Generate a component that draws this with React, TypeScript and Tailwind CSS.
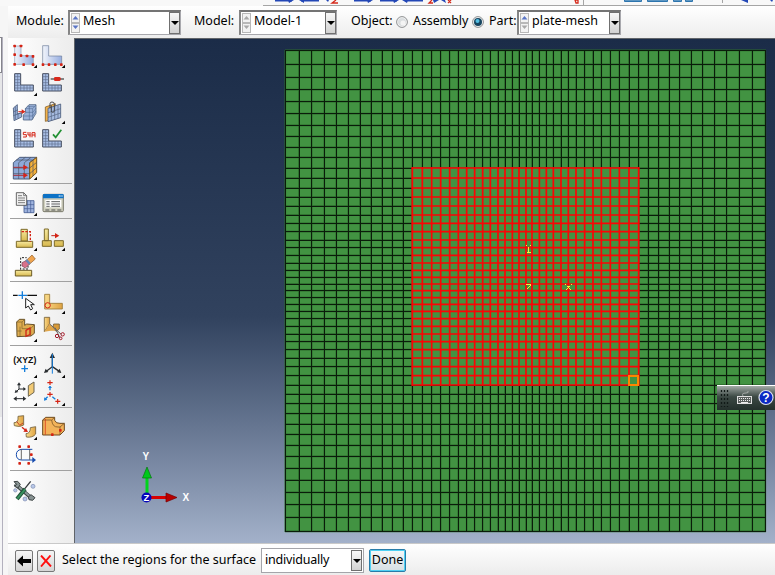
import type { ReactNode } from "react";

const FONT = "font-['Noto_Sans','Open_Sans',sans-serif]";

/* Mesh seed positions, in thirds of a pixel */
const colsLeft = [16, 57, 95, 133, 169, 205, 240, 273, 306, 337, 369, 397, 427, 455, 482, 509, 535, 560, 584, 608, 631, 654, 675, 697, 717, 738].map((v) => 280 + v / 3);
const colsRight = [21, 43, 64, 85, 108, 130, 153, 179, 204, 229, 256, 283, 312, 341, 370, 401, 433, 464, 499, 533, 569, 605, 643, 682, 721].map((v) => 525 + v / 3);
const rowsTop = [13, 55, 94, 131, 167, 203, 238, 271, 304, 334, 366, 396, 426, 453, 480, 507, 532, 557].map((v) => 46 + v / 3);
const rowsBottom = [0, 23, 46, 69, 91, 112, 132, 152, 173, 193, 214, 236, 259, 282, 305, 329, 354, 380, 407, 435, 462, 491, 521, 552, 583, 616, 649, 685, 720, 757, 794, 832, 874].map((v) => 240 + v / 3);
const cols = [...colsLeft, ...colsRight];
const rows = [...rowsTop, ...rowsBottom];
const redCols = cols.slice(11, 40);
const redRows = rows.slice(10, 38);

const snap = (v: number) => Math.floor(v) + 0.5;
const vLines = (xs: number[], a: number, b: number) => xs.map((x) => `M${x.toFixed(2)} ${a}V${b}`).join("");
const hLines = (ys: number[], a: number, b: number) => ys.map((y) => `M${a} ${y.toFixed(2)}H${b}`).join("");

function Viewport() {
  const rx0 = redCols[0];
  const rx1 = redCols[redCols.length - 1];
  const ry0 = redRows[0];
  const ry1 = redRows[redRows.length - 1];
  return (
    <svg className="block" width="700" height="504" viewBox="75 39 700 504">
      <rect x="285" y="50" width="481" height="482" fill="#429342" />
      <path d={vLines(cols, 50, 532)} stroke="#2b6a2b" strokeWidth="1.6" />
      <path d={hLines(rows, 285, 766)} stroke="#2b6a2b" strokeWidth="1.6" />
      <path d={vLines(cols.map(snap), 50, 532)} stroke="#0a1c0a" strokeWidth="1" />
      <path d={hLines(rows.map(snap), 285, 766)} stroke="#0a1c0a" strokeWidth="1" />
      <rect x={rx0} y={ry0} width={rx1 - rx0} height={ry1 - ry0} fill="#429342" />
      <path d={vLines(redCols, ry0 - 0.8, ry1 + 0.8)} stroke="#fa0505" strokeWidth="1.7" />
      <path d={hLines(redRows, rx0 - 0.8, rx1 + 0.8)} stroke="#fa0505" strokeWidth="1.7" />
      <rect x="629" y="376" width="9" height="9" fill="#429342" stroke="#ff8500" strokeWidth="2" />

      <g stroke="#f4f43c" strokeWidth="1" fill="none" shapeRendering="crispEdges">
        <path d="M526 245.500H527M530 245.500H531M528.500 247V252M526.500 252.500H531" />
        <path d="M526 284.500H531M530 285.500H531M529 286.500H530M528 287.500H529M527 288.500H528" />
        <path d="M565 284.500H566M571 284.500H572M567 286.500H570M568 287.500H569M567 288.500H568M569 288.500H570M566 289.500H567M570 289.500H571" />
      </g>

      <path d="M147 493V474" stroke="#00d41c" strokeWidth="3" />
      <path d="M147 467L151.500 478H142.500Z" fill="#00c91a" stroke="#04760f" strokeWidth=".7" />
      <path d="M151 497.500H168" stroke="#d80000" strokeWidth="3" />
      <path d="M177 497.500L166 493V502Z" fill="#b90000" stroke="#750000" strokeWidth=".7" />
      <circle cx="146.500" cy="497.500" r="5" fill="#0606b8" />
      <g className="font-['Liberation_Sans',sans-serif] font-bold" fill="#fff">
        <text x="142.500" y="460" fontSize="10">Y</text>
        <text x="143.500" y="501" fontSize="9.500">Z</text>
        <text x="182.500" y="500.500" fontSize="10">X</text>
      </g>
    </svg>
  );
}

/* Toolbox icons are drawn on a grid of 84 units to 28 px */
function Tool({ x, y, more, children }: { x: number; y: number; more?: boolean; children: ReactNode }) {
  return (
    <svg className="block size-7 shrink-0" viewBox={`${x} ${y} 84 84`} fill="none">
      {children}
      {more && <path d={`M${x + 78} ${y + 71}v10h-10z`} fill="#000" />}
    </svg>
  );
}

function Group({ children, first }: { children: ReactNode; first?: boolean }) {
  return <div className={`ml-[3px] flex w-14 flex-wrap ${first ? "pt-[3px]" : "pt-[5px]"}`}>{children}</div>;
}

const Sep = ({ gap = "mt-px" }: { gap?: string }) => <div className={`ml-0.5 h-px w-[62px] bg-[#a0a0a0] ${gap}`} />;

const dots = (pts: number[][], r = 4) => pts.map(([x, y]) => <rect key={`${x}-${y}`} x={x - r} y={y - r} width={2 * r} height={2 * r} rx="2" fill="#d42314" />);

function MeshedL({ x, y }: { x: number; y: number }) {
  return (
    <g transform={`translate(${x} ${y})`}>
      <path d="M2 2H20V36H58V54H2Z" fill="#a9bfe6" stroke="#454d5e" strokeWidth="3" />
      <path d="M11 2V54M20 36V54M30 36V54M39 36V54M48 36V54M2 11H20M2 20H20M2 29H20M2 37H20M2 45H58" stroke="#5d6d8c" strokeWidth="2" />
    </g>
  );
}

function Toolbox() {
  return (
    <div className="flex w-[66px] shrink-0 flex-col bg-linear-to-r from-white to-[#ececec]">
      <Group first>
        <Tool x={33} y={15} more>
          <path d="M44 30H63V59H100V85H44Z" fill="url(#blue)" stroke="#8d99ae" strokeWidth="2" />
          {dots([[44, 30], [63, 30], [44, 56], [63, 59], [81, 60], [99, 61], [44, 85], [71, 86], [99, 86]])}
        </Tool>
        <Tool x={117} y={15} more>
          <path d="M128 29H146V60H185V85H128Z" fill="url(#blue)" stroke="#6c7c99" strokeWidth="2" />
          {dots([[129, 86], [147, 86], [166, 86], [184, 86]])}
        </Tool>
        <Tool x={33} y={99} more><MeshedL x={42} y={111} /></Tool>
        <Tool x={117} y={99}>
          <MeshedL x={126} y={111} />
          <path d="M152 129H192" stroke="#171717" strokeWidth="3" />
          <rect x="162" y="123" width="20" height="12" rx="4" fill="#d7281b" />
        </Tool>
        <Tool x={33} y={183}>
          <path d="M40 216L52 206V234L65 230V243L42 254Z" fill="#9bb2da" stroke="#4b5c7b" strokeWidth="2.500" />
          <path d="M46 212V250M40 228L54 221M40 239L65 230M54 235V247" stroke="#4b5c7b" strokeWidth="2" />
          <path d="M76 218L87 206H108V232L96 252H70V237L77 230Z" fill="#9bb2da" stroke="#536787" strokeWidth="2.500" />
          <path d="M75 218H98L108 207M83 212H104M88 209V252M98 218V250M71 240H98L108 225M76 229H99L108 216" stroke="#506a92" strokeWidth="1.700" />
          <path d="M55 227H68" stroke="#d7281b" strokeWidth="3" />
          <path d="M65 220L77 227L65 234Z" fill="#d7281b" />
        </Tool>
        <Tool x={117} y={183} more>
          <path d="M136 213L166 203V249L136 256Z" fill="#f3b24a" stroke="#8a6329" strokeWidth="2.500" />
          <path d="M144 217L182 204V245L144 257Z" fill="#a5badf" stroke="#4b5c7b" strokeWidth="2.500" />
          <path d="M154 214V253M164 211V250M174 208V247M144 230L182 218M144 244L182 231" stroke="#53627f" strokeWidth="2" />
          <path d="M150 217V203Q150 198 156 198Q163 198 163 204V224Q163 229 158 229Q154 229 154 224V208" stroke="#45464b" strokeWidth="3" />
        </Tool>
        <Tool x={33} y={267}>
          <MeshedL x={42} y={279} />
          <path d="M79 289H70V296H79V303H69M84 288V297H92M90 288V304M96 304V290H105V304M96 297H105" stroke="#d42314" strokeWidth="3" />
        </Tool>
        <Tool x={117} y={267}>
          <MeshedL x={126} y={279} />
          <path d="M159 295L167 304L184 281" stroke="#229133" strokeWidth="5" />
        </Tool>
        <Tool x={33} y={351} more>
          <path d="M40 380L59 364H110L89 380V429H40Z" fill="#8ea9d8" stroke="#4b5c7b" strokeWidth="3" />
          <path d="M89 380L110 364V410L89 429Z" fill="#f5b13b" stroke="#75541e" strokeWidth="3" />
          <path d="M40 396H89L110 379M40 413H89L110 395M56 380L76 364M73 380L93 364M49 372H100M56 380V429M73 380V429M99 372V420" stroke="#4b5261" strokeWidth="2" />
          <path d="M40 394H72M40 418H72" stroke="#a9303b" strokeWidth="3" />
          <path d="M70 386L84 394L70 402ZM70 410L84 418L70 426Z" fill="#d62219" />
        </Tool>
      </Group>
      <Sep gap="mt-[2px]" />
      <Group>
        <Tool x={33} y={27} more>
          <path d="M72 62H102V98H72Z" fill="#a0b5df" stroke="#435b91" strokeWidth="2.500" />
          <path d="M82 62V98M92 62V98M72 74H102M72 86H102" stroke="#435b91" strokeWidth="2" />
          <path d="M49 38H71L80 47V76H49Z" fill="#f1f1f1" stroke="#4d4d4d" strokeWidth="2.500" />
          <path d="M71 38V47H80M54 47H66M54 54H75M54 61H75M54 68H75" stroke="#686868" strokeWidth="2.500" />
        </Tool>
        <Tool x={117} y={27}>
          <rect x="129" y="43" width="61" height="52" rx="3" fill="#d0d0bf" stroke="#777769" strokeWidth="3" />
          <path d="M129 55V44Q129 42 132 42H188Q191 42 191 45V55Z" fill="#0c72c6" />
          <path d="M176 48H182M184 48H188" stroke="#fff" strokeWidth="3" />
          <path d="M136 60H184V82H136Z" fill="#fff" />
          <path d="M139 65H149M154 65H180M139 72H149M154 72H180M139 79H149M154 79H180M136 90H148M154 90H166M172 90H184" stroke="#36383a" strokeWidth="2.500" />
        </Tool>
      </Group>
      <Sep />
      <Group>
        <Tool x={33} y={132} more>
          <path d="M63 148H82V183H63Z" fill="url(#gold)" stroke="#7c6a2b" strokeWidth="3" />
          <path d="M49 184H98V202H49Z" fill="url(#gold)" stroke="#7c6a2b" strokeWidth="3" />
          <path d="M65 155H91V186" stroke="#d42314" strokeWidth="4" strokeDasharray="7 4" />
        </Tool>
        <Tool x={117} y={132} more>
          <path d="M133 147H145V182H133ZM127 182H154V199H127ZM163 182H190V199H163Z" fill="url(#gold)" stroke="#7c6a2b" strokeWidth="3" />
          <path d="M154 167H168" stroke="#c62218" strokeWidth="3" />
          <path d="M165 159L178 167L165 175Z" fill="#d42314" />
        </Tool>
        <Tool x={33} y={216}>
          <path d="M46 271H95V288H46Z" fill="url(#gold)" stroke="#6c5c27" strokeWidth="3" />
          <path d="M62 269V233H80M68 267H84V255" stroke="#202020" strokeWidth="3" strokeDasharray="6 4" />
          <path d="M66 248L78 242L88 253L76 264L66 258Z" fill="#d9718a" stroke="#793e52" strokeWidth="2" />
          <path d="M78 242L96 225L106 237L88 253Z" fill="#efa44e" stroke="#8c5724" strokeWidth="2" />
          <path d="M76 242L87 254L92 249L81 237Z" fill="#6787ba" />
        </Tool>
      </Group>
      <Sep />
      <Group>
        <Tool x={33} y={321} more>
          <path d="M39 346H53M82 346H111" stroke="#111" strokeWidth="3.500" />
          <path d="M55 346H81M67 334V357" stroke="#147edb" strokeWidth="4" />
          <path d="M77 355V384L85 378L92 390L98 386L92 374L103 374Z" fill="#fff" stroke="#202020" strokeWidth="3" />
        </Tool>
        <Tool x={117} y={321} more>
          <path d="M134 343H149V370H187V387H134Z" fill="url(#gold2)" stroke="#9a7835" strokeWidth="2.500" />
          <circle cx="143" cy="376" r="8" stroke="#d42314" strokeWidth="3" />
        </Tool>
        <Tool x={33} y={405} more>
          <path d="M50 426L58 418H74V436L80 432L103 434V460L93 468L51 470Z" fill="#dfad50" stroke="#68532c" strokeWidth="3" />
          <path d="M50 426H66L74 418M66 426V446H92L103 434M52 453H65M60 440V468M92 446V468" stroke="#7b602a" strokeWidth="2" />
          <path d="M78 451L90 444V464L78 469Z" stroke="#cf2717" strokeWidth="4" />
        </Tool>
        <Tool x={117} y={405}>
          <path d="M133 412H149V431L133 455Z" fill="url(#gold2)" stroke="#76603b" strokeWidth="2.500" />
          <path d="M161 432H178V447L169 454L158 445Z" fill="#d99b39" stroke="#76603b" strokeWidth="2.500" />
          <path d="M133 455L149 431L166 452H152Z" fill="#e0a64a" />
          <path d="M149 432L184 463M165 443L180 474" stroke="#666" strokeWidth="3" />
          <circle cx="171" cy="468" r="5" stroke="#a5192a" strokeWidth="3" />
          <circle cx="188" cy="463" r="5" stroke="#a5192a" strokeWidth="3" />
          <circle cx="182" cy="475" r="4" stroke="#a5192a" strokeWidth="3" />
        </Tool>
      </Group>
      <Sep gap="mt-[2px]" />
      <Group>
        <Tool x={33} y={33} more>
          <text x="40" y="68" fontSize="25" textLength="69" lengthAdjust="spacingAndGlyphs" className="font-['Liberation_Sans',sans-serif] font-bold" fill="#111">(XYZ)</text>
          <path d="M64 86H84M74 76V96" stroke="#147edb" strokeWidth="4" />
        </Tool>
        <Tool x={117} y={33} more>
          <path d="M157 53V80L137 95M157 80L179 95" stroke="#292d30" strokeWidth="4" />
          <path d="M157 38L165 54H149ZM132 99L137 86L145 96ZM184 99L171 97L179 86Z" fill="#292d30" />
          <path d="M157 42V101" stroke="#147edb" strokeWidth="3" />
        </Tool>
        <Tool x={33} y={117} more>
          <path d="M57 132V147H74M57 147L49 155M47 176H72" stroke="#292d30" strokeWidth="3" />
          <path d="M57 127L63 136H51ZM78 147L70 141V153ZM44 159L47 149L55 156ZM40 176L50 169V183ZM79 176L69 169V183Z" fill="#292d30" />
          <path d="M85 137L102 126V157L85 169Z" fill="#f2ca75" stroke="#6d6550" strokeWidth="3" />
        </Tool>
        <Tool x={117} y={117} more>
          <path d="M142 128H158M150 121V135M142 163H158M150 156V170M166 184H181M173 177V191" stroke="#d42314" strokeWidth="3.500" />
          <path d="M150 139V151M143 170L135 178M157 170L166 178" stroke="#147edb" strokeWidth="4" />
          <path d="M150 137L156 144H144ZM132 182L133 172L142 179Z" fill="#147edb" />
        </Tool>
      </Group>
      <Sep gap="mt-0" />
      <Group>
        <Tool x={33} y={219} more>
          <path d="M54 229L71 227V255Q60 263 43 257L42 248Q56 249 54 229Z" fill="url(#gold2)" stroke="#72603d" strokeWidth="2.500" />
          <path d="M50 244L59 256L69 249" stroke="#c72b1b" strokeWidth="2.500" />
          <path d="M66 262L75 269" stroke="#d42314" strokeWidth="4" />
          <path d="M84 276L70 275L78 264Z" fill="#d42314" />
          <path d="M91 263L107 260V282Q98 294 79 291L78 281Q91 281 91 263Z" fill="url(#gold2)" stroke="#72603d" strokeWidth="2.500" />
        </Tool>
        <Tool x={117} y={219}>
          <path d="M128 240L137 232H164V241Q168 251 180 250H193V272L180 285H128Z" fill="#f3b35a" stroke="#6e4b20" strokeWidth="3" />
          <path d="M128 240H155L164 232M155 240Q157 262 174 261H180L193 250M180 261V285" stroke="#805a29" strokeWidth="2.500" />
          <path d="M136 236V284" stroke="#d42314" strokeWidth="2" />
          {dots([[157, 284], [181, 271]], 4)}
        </Tool>
        <Tool x={33} y={303}>
          <path d="M97 328H65Q49 330 49 344Q49 359 64 360H102" stroke="#174cae" strokeWidth="3" />
          <path d="M64 328V359M89 328V359" stroke="#222" strokeWidth="2" />
          <path d="M97 351L108 360L97 369Z" fill="#174cae" />
          {dots([[59, 320], [86, 320], [94, 344], [59, 370], [86, 370]])}
        </Tool>
      </Group>
      <Sep />
      <Group>
        <Tool x={33} y={408}>
          <path d="M45 432L92 472" stroke="#3e4646" strokeWidth="11" />
          <path d="M46 432L92 471" stroke="#8d9a9a" strokeWidth="6" />
          <path d="M42 425L53 424L61 433L54 444L44 439L50 433ZM85 471L93 464L105 473L98 481L87 479Z" fill="#879292" stroke="#3d4444" strokeWidth="3" />
          <path d="M92 424L72 449" stroke="#34393b" strokeWidth="4" />
          <path d="M75 447L51 477" stroke="#205239" strokeWidth="12" />
          <path d="M75 448L52 476" stroke="#38915e" strokeWidth="6" />
          <g fill="#b9c8e8" stroke="#7a89ad" strokeWidth="2"><circle cx="99" cy="439" r="6" /><circle cx="46" cy="451" r="5" /><circle cx="75" cy="477" r="6" /></g>
        </Tool>
      </Group>
    </div>
  );
}

function Spin({ up, down }: { up: string; down: string }) {
  return (
    <svg className="ml-px block shrink-0" width="9" height="20" viewBox="0 0 9 20">
      <rect x=".5" y=".5" width="8" height="9" fill="#f2f2f2" stroke="#b8b8b8" />
      <rect x=".5" y="10.500" width="8" height="9" fill="#f2f2f2" stroke="#b8b8b8" />
      <path d="M4.500 3L7.500 6.500H1.500Z" fill={up} />
      <path d="M4.500 16L1.500 12.500H7.500Z" fill={down} />
    </svg>
  );
}

function DropButton() {
  return (
    <div className="flex h-full w-[11px] shrink-0 items-center justify-center border border-[#707070] bg-linear-to-b from-[#f8f8f8] to-[#d2d2d2]">
      <svg className="block shrink-0" width="8" height="4" viewBox="0 0 8 4"><path d="M0 0H8L4 4Z" fill="#000" /></svg>
    </div>
  );
}

function Combo({ width, text, up, down }: { width: string; text: string; up: string; down: string }) {
  return (
    <div className={`flex h-[25px] items-center border border-t-2 border-l-2 border-[#a8a8ad] border-t-[#747474] border-l-[#858585] bg-white ${width}`}>
      <Spin up={up} down={down} />
      <span className="ml-[3px] flex-1 pb-0.5 whitespace-nowrap">{text}</span>
      <DropButton />
    </div>
  );
}

function Radio({ on }: { on?: boolean }) {
  return (
    <svg className="block shrink-0" width="12" height="12" viewBox="0 0 12 12">
      <circle cx="6" cy="6" r="5.400" fill="#f6f6f6" stroke="#8d8f91" />
      <circle cx="6" cy="6" r="4" fill={on ? "#16445f" : "#dadddf"} />
      {on ? <circle cx="5.500" cy="5" r="2" fill="#52bfe4" /> : <circle cx="7" cy="7" r="2.500" fill="#f4f4f4" />}
    </svg>
  );
}

function TopStrip() {
  return (
    <svg className="block shrink-0" width="775" height="6" viewBox="0 0 775 6">
      <rect width="775" height="6" fill="#f8f8f8" />
      <path d="M263 5.500H775" stroke="#a5a5a5" />
      <path d="M275 .8H292M301 .8H319M354 .8H371M380 .8H397M405 .8H423" stroke="#2347b6" strokeWidth="1.600" />
      <path d="M288 0H294L289 3ZM304 0H299L304 3ZM367 0H373L368 3ZM393 0H399L394 3ZM408 0H402L407 3ZM326 0H329L328 2ZM433 0H439L434 3ZM441 0H445L446 3Z" fill="#2347b6" />
      <path d="M336 0L332 3H338M432 0L429 3H433M448 0L451 3M451 0L448 3M575 0H578V3H576Z" stroke="#d52b1c" strokeWidth="1.300" fill="none" />
      <path d="M583.500 0V5M722.500 0V3" stroke="#a5a5a5" />
      <path d="M624.500 0V1.500H641.500V0ZM647.500 0V1.500H667.500V0ZM673.500 0V1.500H681.500V0ZM685.500 0V1.500H692.500V0Z" fill="#8fb8d6" stroke="#2d75ae" />
      <path d="M741 0H748V3ZM770 0H773L772 2Z" fill="#2347b6" />
    </svg>
  );
}

function FloatingBar() {
  return (
    <div className="absolute top-[385px] left-[717px] h-[25px] w-[58px] overflow-hidden border-t border-white bg-linear-to-b from-[#a3aaa7] via-[#3c4944] via-45% to-[#24302c]">
      <svg className="block" width="58" height="24" viewBox="0 0 58 24">
        <path d="M4.500 4V21M7.500 4V21M10.500 4V21" stroke="#111a17" strokeWidth="1.300" strokeDasharray="2 2" />
        <path d="M26 10Q24 7 29 7Q32 7 31 5" stroke="#a6aaa8" fill="none" />
        <rect x="20.500" y="10.500" width="14" height="7" fill="#5b605e" stroke="#dedede" />
        <path d="M22 12.500H33M22 14.500H33" stroke="#eee" strokeDasharray="1 1" />
        <path d="M24 16.500H31" stroke="#eee" />
        <circle cx="49" cy="11.500" r="7" fill="#0b28c4" stroke="#d9dcea" strokeWidth="1.200" />
        <text x="49" y="16" fontSize="12" textAnchor="middle" fill="#fff" className="font-['Liberation_Sans',sans-serif] font-bold">?</text>
      </svg>
    </div>
  );
}

export default function App() {
  return (
    <div className={`relative flex h-[575px] w-[775px] flex-col overflow-hidden bg-[#f5f5f5] text-[12.5px] leading-none text-black ${FONT}`}>
      <svg className="absolute size-0">
        <defs>
          <linearGradient id="blue" x2="1"><stop stopColor="#f2f5fb" /><stop offset="1" stopColor="#96ade0" /></linearGradient>
          <linearGradient id="gold" y2="1" x2="0"><stop stopColor="#f7eaa0" /><stop offset="1" stopColor="#d8b94f" /></linearGradient>
          <linearGradient id="gold2" x2="1"><stop stopColor="#f9dc8b" /><stop offset="1" stopColor="#dfa242" /></linearGradient>
        </defs>
      </svg>
      <TopStrip />
      <div className="flex min-h-0 flex-1">
        <div className="flex w-2 shrink-0 bg-[#f6f6f6] pt-[31px]">
          <div className="flex w-0.5 flex-col">
            <div className="h-[35px] border-t border-r border-[#85858c] bg-white" />
            <div className="h-[345px] border-t border-[#85858c] bg-[#e6e6e8]" />
            <div className="flex-1 bg-[#f4f4f6]" />
          </div>
          <div className="w-px bg-[#b3b1be]" />
        </div>
        <div className="flex min-w-0 flex-1 flex-col">
          <div className="flex h-8 shrink-0 items-center bg-linear-to-b from-white to-[#ededed] pl-2 whitespace-nowrap">
            <span className="w-[52px] pb-0.5">Module:</span>
            <Combo width="w-[113px]" text="Mesh" up="#5b76c6" down="#5b76c6" />
            <span className="ml-[13px] w-[45px] pb-0.5">Model:</span>
            <Combo width="w-[98px]" text="Model-1" up="#a8a8a8" down="#a8a8a8" />
            <span className="ml-3.5 w-[45px] pb-0.5">Object:</span>
            <Radio />
            <span className="ml-[5px] w-[59px] pb-0.5 tracking-[-0.1px]">Assembly</span>
            <Radio on />
            <span className="ml-[5px] w-[28px] pb-0.5">Part:</span>
            <Combo width="w-[104px]" text="plate-mesh" up="#5b76c6" down="#a8a8a8" />
          </div>
          <div className="flex h-[505px] shrink-0">
            <Toolbox />
            <div className="h-[505px] w-[701px] shrink-0 border-t border-l border-[#606469] bg-linear-to-b from-[#1b2c48] via-[#31425e] via-55% to-[#a3b1ca]">
              <Viewport />
            </div>
          </div>
          <div className="flex h-8 shrink-0 items-center border-t border-[#c9c9c9] bg-linear-to-b from-white to-[#ececec] pt-[2px] pl-[7px] whitespace-nowrap">
            <button className="flex h-[22px] w-[18px] items-center justify-center rounded-[2px] border border-[#777] bg-linear-to-b from-[#f5f5f5] to-[#d5d5d5]">
              <svg className="block shrink-0" width="14" height="12" viewBox="0 0 14 12"><path d="M0 6L6 .5V4H14V8H6V11.500Z" fill="#000" /></svg>
            </button>
            <button className="ml-1 flex h-[22px] w-[18px] items-center justify-center rounded-[2px] border border-[#777] bg-linear-to-b from-[#f5f5f5] to-[#d5d5d5]">
              <svg className="block shrink-0" width="12" height="12" viewBox="0 0 12 12"><path d="M1 .5L11 11.500M10.500 .5L1 11.500" stroke="#ff0d0d" strokeWidth="1.900" /></svg>
            </button>
            <span className="ml-[7px] w-[199px]">Select the regions for the surface</span>
            <div className="flex h-[25px] w-[103px] items-center border border-[#a5a5aa] bg-white p-px">
              <span className="ml-0.5 flex-1 tracking-[-0.2px]">individually</span>
              <DropButton />
            </div>
            <button className="ml-[5px] h-[23px] w-[37px] rounded-[2px] border border-[#277ca9] bg-linear-to-b from-[#f5f8f9] to-[#d6dfe3] text-center shadow-[inset_0_0_0_1px_#4fd0f3]">Done</button>
          </div>
        </div>
      </div>
      <FloatingBar />
    </div>
  );
}
